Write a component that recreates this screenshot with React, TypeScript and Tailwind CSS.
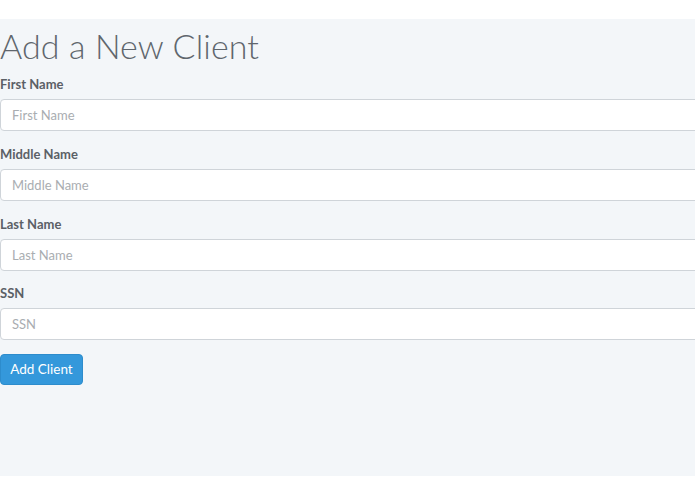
export default function App() {
  const fields = ["First Name", "Middle Name", "Last Name", "SSN"];
  return (
    <div className="w-[695px] h-[494px] overflow-hidden bg-white" style={{ fontFamily: "Lato, 'Open Sans', sans-serif" }}>
      <div className="mt-[19px] h-[457px] bg-[#f3f6f9] w-full">
        <h1 className="text-[34px] font-light leading-none text-[#5f666d] pt-[10px] tracking-[0.1px]">Add a New Client</h1>
        <form className="pt-[12px] flex flex-col">
          {fields.map((f, i) => (
            <div key={f} className={i === 2 ? "flex flex-col mb-[13px]" : "flex flex-col mb-[14px]"}>
              <label className="text-[13px] font-bold text-[#5b6066] leading-[18px] mb-[6px]">{f}</label>
              <input
                placeholder={f}
                className="w-[760px] h-[32px] rounded-[4px] border border-[#cfd4d9] bg-white px-[11px] text-[13px] text-[#555] placeholder:text-[#a9adb1] outline-none"
              />
            </div>
          ))}
          <div>
            <button
              type="button"
              className="w-[83px] h-[31px] rounded-[4px] bg-[#3498db] border border-[#2d8ccc] text-white text-[13.5px]"
            >
              Add Client
            </button>
          </div>
        </form>
      </div>
    </div>
  );
}
